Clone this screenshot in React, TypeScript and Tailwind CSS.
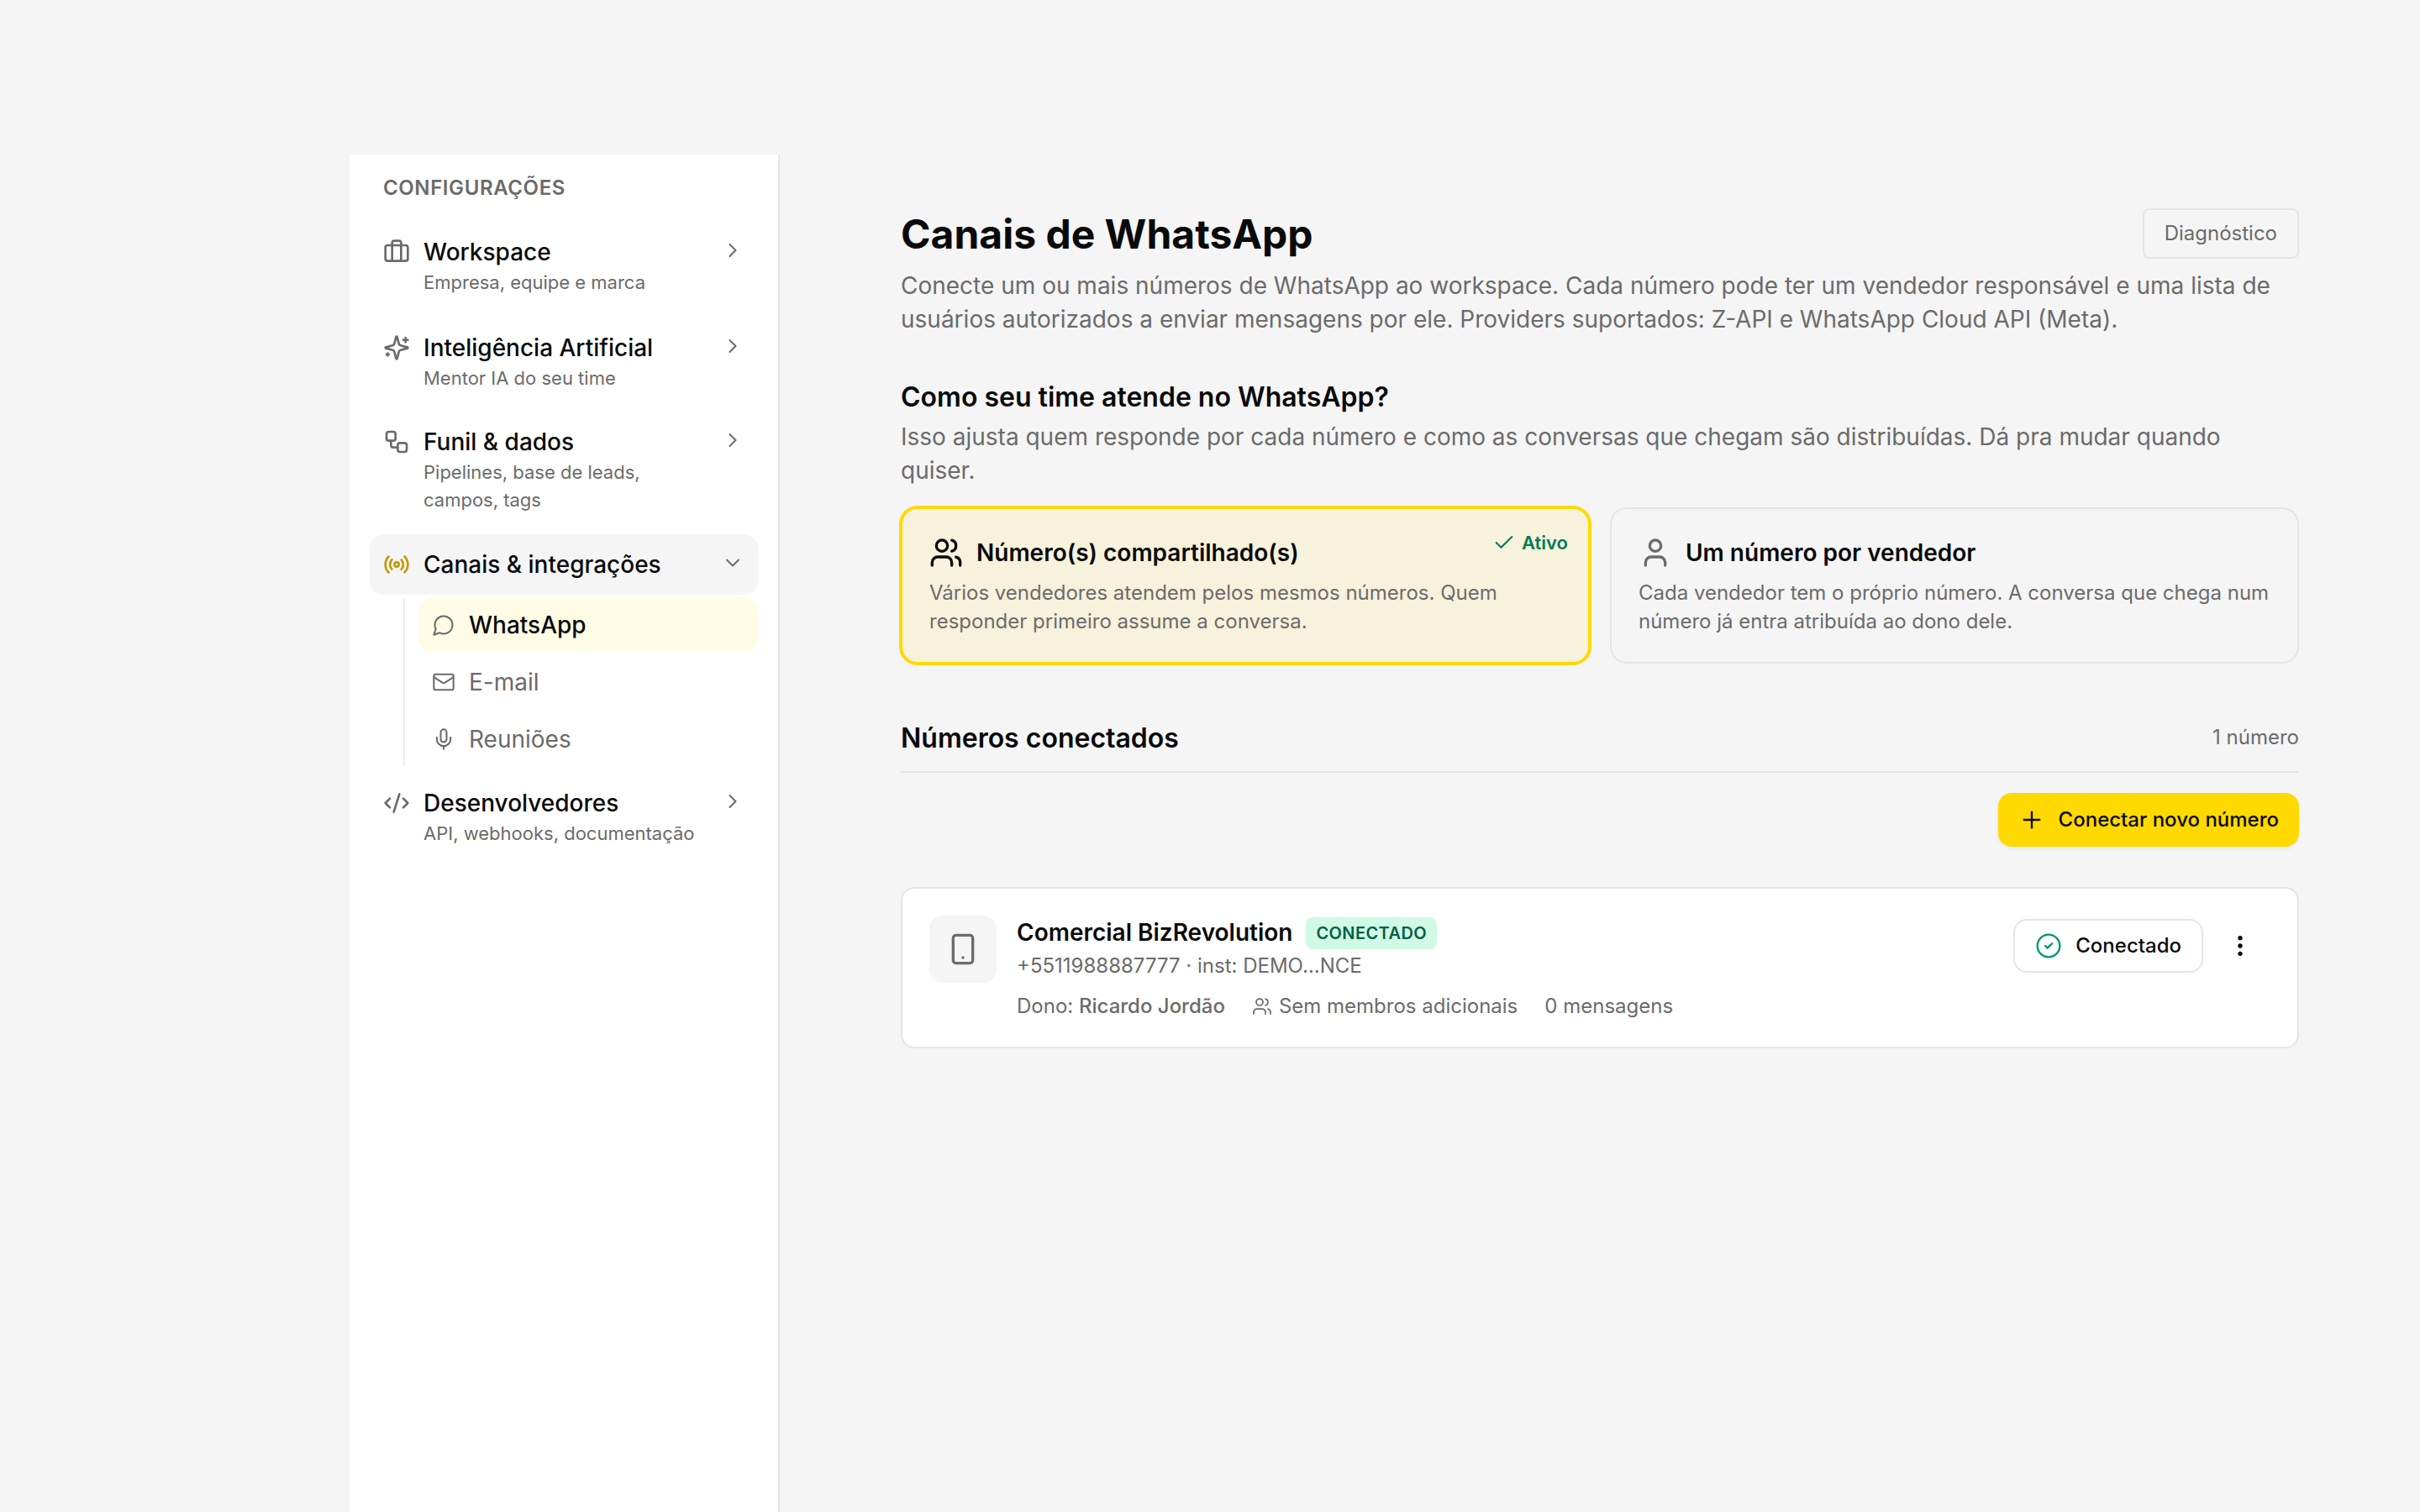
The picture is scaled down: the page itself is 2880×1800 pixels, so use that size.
import React from "react";
import {
  Briefcase,
  Check,
  ChevronDown,
  ChevronRight,
  CircleCheck,
  Code2,
  EllipsisVertical,
  Mail,
  Mic,
  Plus,
  Smartphone,
  User,
  Users,
  Workflow,
} from "lucide-react";

type IconProps = { size?: number; strokeWidth?: number; className?: string };
type IconType = React.ComponentType<IconProps>;

function Glyph({
  size = 24,
  strokeWidth = 2,
  className,
  children,
}: IconProps & { children: React.ReactNode }) {
  return (
    <svg
      width={size}
      height={size}
      viewBox="0 0 24 24"
      fill="none"
      stroke="currentColor"
      strokeWidth={strokeWidth}
      strokeLinecap="round"
      strokeLinejoin="round"
      className={className}
    >
      {children}
    </svg>
  );
}

function SparklesIcon(props: IconProps) {
  return (
    <Glyph {...props}>
      <path d="M9.937 15.5A2 2 0 0 0 8.5 14.063l-6.135-1.582a.5.5 0 0 1 0-.962L8.5 9.936A2 2 0 0 0 9.937 8.5l1.582-6.135a.5.5 0 0 1 .963 0L14.063 8.5A2 2 0 0 0 15.5 9.937l6.135 1.581a.5.5 0 0 1 0 .964L15.5 14.063a2 2 0 0 0-1.437 1.437l-1.582 6.135a.5.5 0 0 1-.963 0z" />
      <path d="M20 3v4" />
      <path d="M22 5h-4" />
      <path d="M4 17v2" />
      <path d="M5 18H3" />
    </Glyph>
  );
}

function RadioIcon(props: IconProps) {
  return (
    <Glyph {...props}>
      <path d="M4.9 19.1C1 15.2 1 8.8 4.9 4.9" />
      <path d="M7.8 16.2c-2.3-2.3-2.3-6.1 0-8.5" />
      <circle cx="12" cy="12" r="2" />
      <path d="M16.2 7.8c2.3 2.3 2.3 6.1 0 8.5" />
      <path d="M19.1 4.9C23 8.8 23 15.1 19.1 19" />
    </Glyph>
  );
}

function ChatIcon(props: IconProps) {
  return (
    <Glyph {...props}>
      <path d="M7.9 20A9 9 0 1 0 4 16.1L2 22Z" />
    </Glyph>
  );
}

type Child = { icon: IconType; label: string; active?: boolean };
type Section = { icon: IconType; label: string; hint?: string; items?: Child[]; nudge?: string };

const sections: Section[] = [
  { icon: Briefcase, label: "Workspace", hint: "Empresa, equipe e marca" },
  {
    icon: SparklesIcon,
    label: "Inteligência Artificial",
    hint: "Mentor IA do seu time",
    nudge: "mt-px -mb-px",
  },
  { icon: Workflow, label: "Funil & dados", hint: "Pipelines, base de leads, campos, tags" },
  {
    icon: RadioIcon,
    label: "Canais & integrações",
    items: [
      { icon: ChatIcon, label: "WhatsApp", active: true },
      { icon: Mail, label: "E-mail" },
      { icon: Mic, label: "Reuniões" },
    ],
  },
  { icon: Code2, label: "Desenvolvedores", hint: "API, webhooks, documentação" },
];

function NavSection({ section }: { section: Section }) {
  const Icon = section.icon;
  const open = Boolean(section.items);
  const Chevron = open ? ChevronDown : ChevronRight;
  return (
    <div className={section.nudge}>
      <div className={`flex items-start gap-4 rounded-[16px] p-4 ${open ? "bg-[#f5f5f5]" : ""}`}>
        <Icon
          size={32}
          strokeWidth={2}
          className={`mt-1 shrink-0 ${open ? "text-[#bf9b00]" : "text-[#6b6b6b]"}`}
        />
        <div className="min-w-0 flex-1">
          <div className="text-[28px] leading-10 font-medium text-[#0a0a0a]">{section.label}</div>
          {section.hint && (
            <div className="text-[22px] leading-[33px] text-[#6b6b6b]">{section.hint}</div>
          )}
        </div>
        <Chevron size={28} strokeWidth={1.75} className="mt-1 ml-2 shrink-0 text-[#6b6b6b]" />
      </div>
      {section.items && (
        <div className="mt-1 ml-10 flex flex-col gap-1 border-l-2 border-[#ededed] pl-4">
          {section.items.map((item) => (
            <div
              key={item.label}
              className={`flex h-16 items-center gap-4 rounded-[16px] px-4 text-[28px] leading-10 ${
                item.active ? "bg-[#fffce5] font-medium text-[#0a0a0a]" : "text-[#6b6b6b]"
              }`}
            >
              <item.icon size={28} strokeWidth={1.75} className="shrink-0 text-[#6b6b6b]" />
              {item.label}
            </div>
          ))}
        </div>
      )}
    </div>
  );
}

function Sidebar() {
  return (
    <aside className="w-[512px] shrink-0 border-r-2 border-[#e5e5e5] bg-white p-6">
      <div className="px-4 pb-6 text-[24px] leading-8 font-semibold tracking-[0.6px] text-[#6b6b6b]">
        CONFIGURAÇÕES
      </div>
      <nav className="flex flex-col gap-2">
        {sections.map((s) => (
          <NavSection key={s.label} section={s} />
        ))}
      </nav>
    </aside>
  );
}

function ModeCard({
  icon: Icon,
  title,
  text,
  active = false,
}: {
  icon: IconType;
  title: string;
  text: string;
  active?: boolean;
}) {
  return (
    <div
      className={`relative rounded-[20px] border-2 p-8 ${
        active ? "border-[#ffd900] bg-[#f7f2dc] ring-2 ring-[#ffd900]" : "border-[#e5e5e5]"
      }`}
    >
      {active && (
        <div className="absolute top-6 right-6 flex items-center gap-[7px] text-[22px] leading-[33px] font-semibold text-[#007a55]">
          <Check size={28} strokeWidth={1.75} className="mb-px" />
          Ativo
        </div>
      )}
      <div className="flex items-center gap-4">
        <Icon
          size={40}
          strokeWidth={2}
          className={active ? "text-[#0a0a0a]" : "text-[#6b6b6b]"}
        />
        <div className="text-[28px] leading-10 font-semibold text-[#0a0a0a]">{title}</div>
      </div>
      <p className="mt-[11px] -mb-px text-[24px] leading-[34px] text-[#6b6b6b]">{text}</p>
    </div>
  );
}

function NumberCard() {
  return (
    <div className="mt-12 flex items-start gap-6 rounded-[16px] border-2 border-[#e5e5e5] bg-white p-8">
      <div className="flex size-20 shrink-0 items-center justify-center rounded-[16px] bg-[#f5f5f5] text-[#6b6b6b]">
        <Smartphone size={40} strokeWidth={2} />
      </div>
      <div className="min-w-0 flex-1 text-[24px] leading-8 text-[#6b6b6b]">
        <div className="flex h-10 items-center gap-4">
          <span className="text-[28px] leading-10 font-semibold text-[#0a0a0a]">
            Comercial BizRevolution
          </span>
          <span className="mt-[2px] rounded-[8px] bg-[#d0fae5] px-3 py-1 text-[20px] leading-[30px] font-semibold tracking-[0.4px] text-[#006045]">
            CONECTADO
          </span>
        </div>
        <div className="mt-1">+5511988887777 · inst: DEMO…NCE</div>
        <div className="mt-4 flex items-center gap-8">
          <span>
            Dono: <span className="font-medium">Ricardo Jordão</span>
          </span>
          <span className="flex items-center gap-2">
            <Users size={24} strokeWidth={1.75} />
            Sem membros adicionais
          </span>
          <span>0 mensagens</span>
        </div>
      </div>
      <div className="mt-1 flex items-center gap-2 text-[#0a0a0a]">
        <button className="flex h-16 items-center gap-4 rounded-[16px] border-2 border-[#e5e5e5] px-6 text-[24px] leading-8 font-medium">
          <CircleCheck size={32} strokeWidth={1.75} className="text-[#009966]" />
          Conectado
        </button>
        <button className="flex h-16 w-[72px] items-center justify-center" aria-label="Mais opções">
          <EllipsisVertical size={32} strokeWidth={2} />
        </button>
      </div>
    </div>
  );
}

export default function App() {
  return (
    <div className="flex h-[1800px] w-[2880px] overflow-hidden bg-[#f5f5f5] pt-[184px] pl-[416px] font-['Inter',sans-serif]">
      <Sidebar />
      <main className="ml-36 w-[1664px] pt-16">
        <div className="flex items-center justify-between">
          <h1 className="pt-[2px] text-[48px] leading-[58px] font-bold text-[#0a0a0a]">
            Canais de WhatsApp
          </h1>
          <button className="rounded-[8px] border-2 border-[#e5e5e5] px-6 py-3 text-[24px] leading-8 text-[#6b6b6b]">
            Diagnóstico
          </button>
        </div>
        <p className="mt-3 text-[28px] leading-10 text-[#6b6b6b]">
          Conecte um ou mais números de WhatsApp ao workspace. Cada número pode ter um vendedor
          responsável e uma lista de usuários autorizados a enviar mensagens por ele. Providers
          suportados: Z-API e WhatsApp Cloud API (Meta).
        </p>

        <h2 className="mt-12 pt-[2px] text-[32px] leading-[46px] font-semibold text-[#0a0a0a]">
          Como seu time atende no WhatsApp?
        </h2>
        <p className="mt-1 text-[28px] leading-10 text-[#6b6b6b]">
          Isso ajusta quem responde por cada número e como as conversas que chegam são
          distribuídas. Dá pra mudar quando quiser.
        </p>
        <div className="mt-6 grid grid-cols-2 gap-6">
          <ModeCard
            active
            icon={Users}
            title="Número(s) compartilhado(s)"
            text="Vários vendedores atendem pelos mesmos números. Quem responder primeiro assume a conversa."
          />
          <ModeCard
            icon={User}
            title="Um número por vendedor"
            text="Cada vendedor tem o próprio número. A conversa que chega num número já entra atribuída ao dono dele."
          />
        </div>

        <div className="mt-16 flex items-center justify-between border-b-2 border-[#e5e5e5] pb-4">
          <h2 className="pt-[2px] text-[32px] leading-[46px] font-semibold text-[#0a0a0a]">
            Números conectados
          </h2>
          <span className="text-[24px] leading-8 text-[#6b6b6b]">1 número</span>
        </div>
        <div className="mt-6 flex justify-end">
          <button className="flex h-16 items-center gap-4 rounded-[16px] bg-[#ffd900] px-6 text-[24px] leading-8 font-medium text-[#0a0a0a] shadow-[0_2px_4px_rgba(0,0,0,0.05)]">
            <Plus size={32} strokeWidth={1.75} />
            Conectar novo número
          </button>
        </div>
        <NumberCard />
      </main>
    </div>
  );
}
